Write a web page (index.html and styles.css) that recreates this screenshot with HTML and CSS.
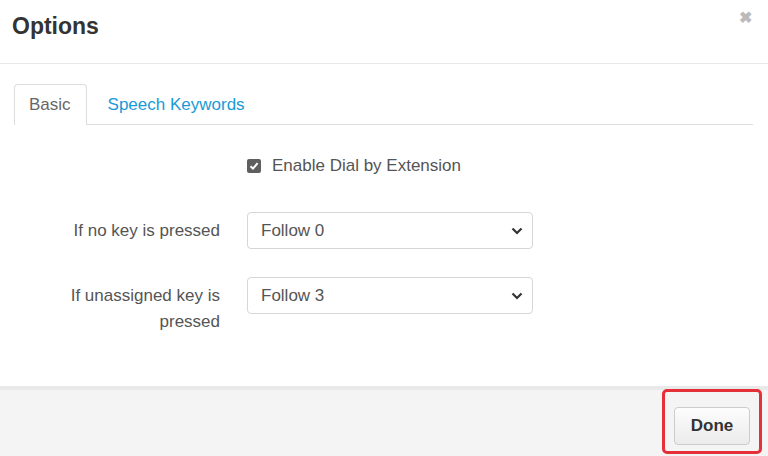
FILE: index.html
```html
<!DOCTYPE html>
<html lang="en">
<head>
    <meta charset="UTF-8">
    <title>Options</title>
    <link rel="stylesheet" href="styles.css">
</head>
<body>
    <div class="modal">
        <!-- Kopfzeile -->
        <div class="modal-header">
            <h1>Options</h1>
            <span class="close">&#10006;</span>
        </div>

        <div class="modal-body">
            <ul class="tabs">
                <li class="tab active">Basic</li>
                <li class="tab">Speech Keywords</li>
            </ul>

            <div class="form">
                <div class="row">
                    <div class="label"></div>
                    <label class="check">
                        <span class="box">
                            <svg width="10" height="10" viewBox="0 0 10 10"><path d="M1.5 5.2 L4 7.6 L8.6 2.2" fill="none" stroke="#fff" stroke-width="2"/></svg>
                        </span>
                        Enable Dial by Extension
                    </label>
                </div>
                <div class="row">
                    <div class="label">If no key is pressed</div>
                    <div class="select">Follow 0
                        <svg width="12" height="8" viewBox="0 0 12 8"><path d="M1.5 1.5 L6 6 L10.5 1.5" fill="none" stroke="#333" stroke-width="2.2"/></svg>
                    </div>
                </div>
                <div class="row">
                    <div class="label">If unassigned key is pressed</div>
                    <div class="select">Follow 3
                        <svg width="12" height="8" viewBox="0 0 12 8"><path d="M1.5 1.5 L6 6 L10.5 1.5" fill="none" stroke="#333" stroke-width="2.2"/></svg>
                    </div>
                </div>
            </div>
        </div>

        <!-- Fusszeile -->
        <div class="modal-footer">
            <div class="highlight">
                <button>Done</button>
            </div>
        </div>
    </div>
</body>
</html>
```

FILE: styles.css
```css
/* Seite */
body {
    margin: 0;
    background-color: white;
    font-family: 'Liberation Sans', Arial, sans-serif;
    color: #555;
}

.modal {
    display: flex;
    flex-direction: column;
    height: 456px;
}

/* Kopfzeile */
.modal-header {
    display: flex;
    justify-content: space-between;
    height: 63px;
    padding: 0 16px 0 12px;
    border-bottom: 1px solid #e8e8e8;
}

.modal-header h1 {
    margin: 13px 0 0;
    font-size: 23px;
    font-weight: bold;
    color: #333;
}

.close {
    margin-top: 8px;
    font-size: 16px;
    font-weight: bold;
    color: #bbb;
}

/* Inhalt */
.modal-body {
    flex: 1;
    padding: 20px 15px 0 14px;
}

.tabs {
    display: flex;
    margin: 0;
    padding: 0;
    list-style: none;
    border-bottom: 1px solid #ddd;
}

.tab {
    height: 39px;
    line-height: 39px;
    padding: 0 15px 0 20px;
    font-size: 17px;
    color: #1a9ad6;
    border: 1px solid transparent;
    border-bottom: none;
    margin-bottom: -1px;
}

.tab.active {
    color: #666;
    background-color: white;
    border-color: #ddd;
    border-radius: 4px 4px 0 0;
    padding: 0 15px 1px 14px;
}

.form {
    padding-top: 33px;
}

.row {
    display: flex;
    align-items: flex-start;
    gap: 27px;
    margin-bottom: 28px;
}

.row:first-child {
    margin-bottom: 38px;
}

.label {
    width: 192px;
    padding-left: 14px;
    text-align: right;
    font-size: 17px;
    line-height: 26px;
    padding-top: 6px;
    color: #555;
}

.row:first-child .label {
    padding-top: 0;
}

.check {
    display: flex;
    align-items: center;
    gap: 11px;
    font-size: 17px;
    color: #555;
    height: 16px;
}

.box {
    display: flex;
    align-items: center;
    justify-content: center;
    width: 14px;
    height: 14px;
    background-color: #5f5f5f;
    border-radius: 2px;
}

.select {
    display: flex;
    justify-content: space-between;
    align-items: center;
    box-sizing: border-box;
    width: 286px;
    height: 37px;
    padding: 0 9px 0 13px;
    border: 1px solid #d6d6d6;
    border-radius: 4px;
    font-size: 17px;
    color: #555;
}

/* Fusszeile */
.modal-footer {
    display: flex;
    justify-content: flex-end;
    align-items: flex-start;
    height: 66px;
    background-color: #f4f4f4;
    border-top: 4px solid #e9e9e9;
    padding-right: 6px;
}

.highlight {
    margin-top: -1px;
    padding: 15px 9px 6px;
    border: 3px solid #e5303a;
    border-radius: 5px;
}

button {
    display: block;
    width: 76px;
    height: 38px;
    font-family: 'Liberation Sans', Arial, sans-serif;
    font-size: 17px;
    font-weight: bold;
    color: #333;
    background: linear-gradient(#fdfdfd, #ebebeb);
    border: 1px solid #ccc;
    border-radius: 4px;
}
```
